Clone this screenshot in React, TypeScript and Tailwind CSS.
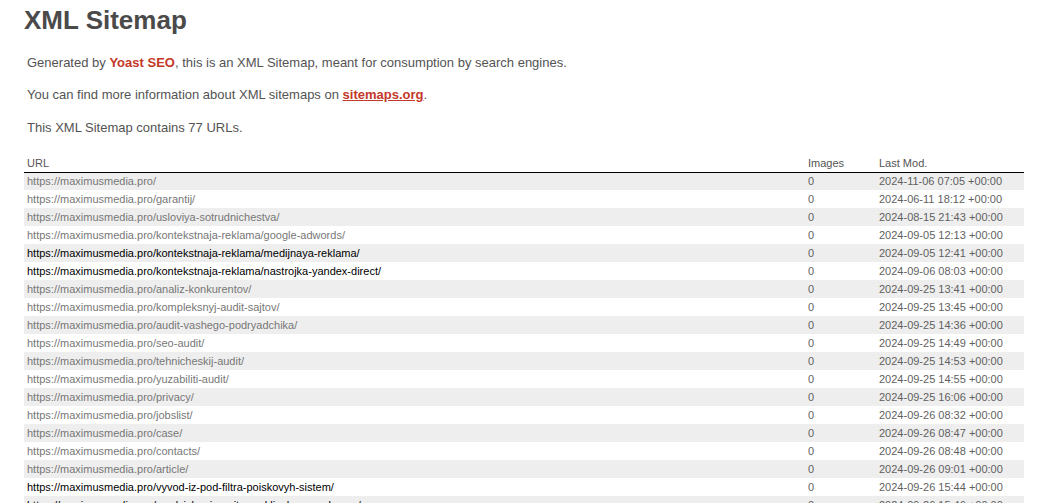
import React from "react";

type Row = { path: string; date: string; visited: boolean };

const rows: Row[] = [
  { path: "", date: "2024-11-06 07:05 +00:00", visited: true },
  { path: "garantij/", date: "2024-06-11 18:12 +00:00", visited: true },
  { path: "usloviya-sotrudnichestva/", date: "2024-08-15 21:43 +00:00", visited: true },
  { path: "kontekstnaja-reklama/google-adwords/", date: "2024-09-05 12:13 +00:00", visited: true },
  { path: "kontekstnaja-reklama/medijnaya-reklama/", date: "2024-09-05 12:41 +00:00", visited: false },
  { path: "kontekstnaja-reklama/nastrojka-yandex-direct/", date: "2024-09-06 08:03 +00:00", visited: false },
  { path: "analiz-konkurentov/", date: "2024-09-25 13:41 +00:00", visited: true },
  { path: "kompleksnyj-audit-sajtov/", date: "2024-09-25 13:45 +00:00", visited: true },
  { path: "audit-vashego-podryadchika/", date: "2024-09-25 14:36 +00:00", visited: true },
  { path: "seo-audit/", date: "2024-09-25 14:49 +00:00", visited: true },
  { path: "tehnicheskij-audit/", date: "2024-09-25 14:53 +00:00", visited: true },
  { path: "yuzabiliti-audit/", date: "2024-09-25 14:55 +00:00", visited: true },
  { path: "privacy/", date: "2024-09-25 16:06 +00:00", visited: true },
  { path: "jobslist/", date: "2024-09-26 08:32 +00:00", visited: true },
  { path: "case/", date: "2024-09-26 08:47 +00:00", visited: true },
  { path: "contacts/", date: "2024-09-26 08:48 +00:00", visited: true },
  { path: "article/", date: "2024-09-26 09:01 +00:00", visited: true },
  { path: "vyvod-iz-pod-filtra-poiskovyh-sistem/", date: "2024-09-26 15:44 +00:00", visited: false },
  { path: "prodvizhenie-sajta-po-kljuchevym-slovam/", date: "2024-09-26 15:46 +00:00", visited: false },
];

export default function App() {
  return (
    <div className="min-h-[503px] bg-white font-['Liberation_Sans',Arial,sans-serif] text-[13px] text-[#545353]">
      <div className="ml-[24px] w-[1000px]">
        {/* Heading */}
        <h1 className="pt-[5px] text-[26px] font-bold leading-[30px] text-[#4b4a4a]">XML Sitemap</h1>

        {/* Intro */}
        <p className="mx-[3px] mt-[20px] leading-[16px]">
          Generated by{" "}
          <a href="#" className="font-bold text-[#c4382a]">
            Yoast SEO
          </a>
          , this is an XML Sitemap, meant for consumption by search engines.
        </p>
        <p className="mx-[3px] mt-[16px] leading-[16px]">
          You can find more information about XML sitemaps on{" "}
          <a href="#" className="font-bold text-[#c4382a] underline">
            sitemaps.org
          </a>
          .
        </p>
        <p className="mx-[3px] mt-[17px] leading-[16px]">This XML Sitemap contains 77 URLs.</p>

        {/* Table */}
        <table className="mt-[18px] w-full border-collapse text-[11px] text-[#545353]">
          <thead>
            <tr className="h-[18px] border-b border-black text-left">
              <th className="w-[782px] pl-[3px] font-normal">URL</th>
              <th className="w-[71px] pl-[2px] font-normal">Images</th>
              <th className="pl-[2px] font-normal">Last Mod.</th>
            </tr>
          </thead>
          <tbody>
            {rows.map((r, i) => (
              <tr key={i} className={"h-[18px] " + (i % 2 === 0 ? "bg-[#eeeeee]" : "bg-white")}>
                <td className="pl-[3px]">
                  <a href="#" className={r.visited ? "text-[#777777]" : "text-black"}>
                    https://maximusmedia.pro/{r.path}
                  </a>
                </td>
                <td className="pl-[2px] text-[#5f5f5f]">0</td>
                <td className="pl-[2px] text-[#5f5f5f]">{r.date}</td>
              </tr>
            ))}
          </tbody>
        </table>
      </div>
    </div>
  );
}
